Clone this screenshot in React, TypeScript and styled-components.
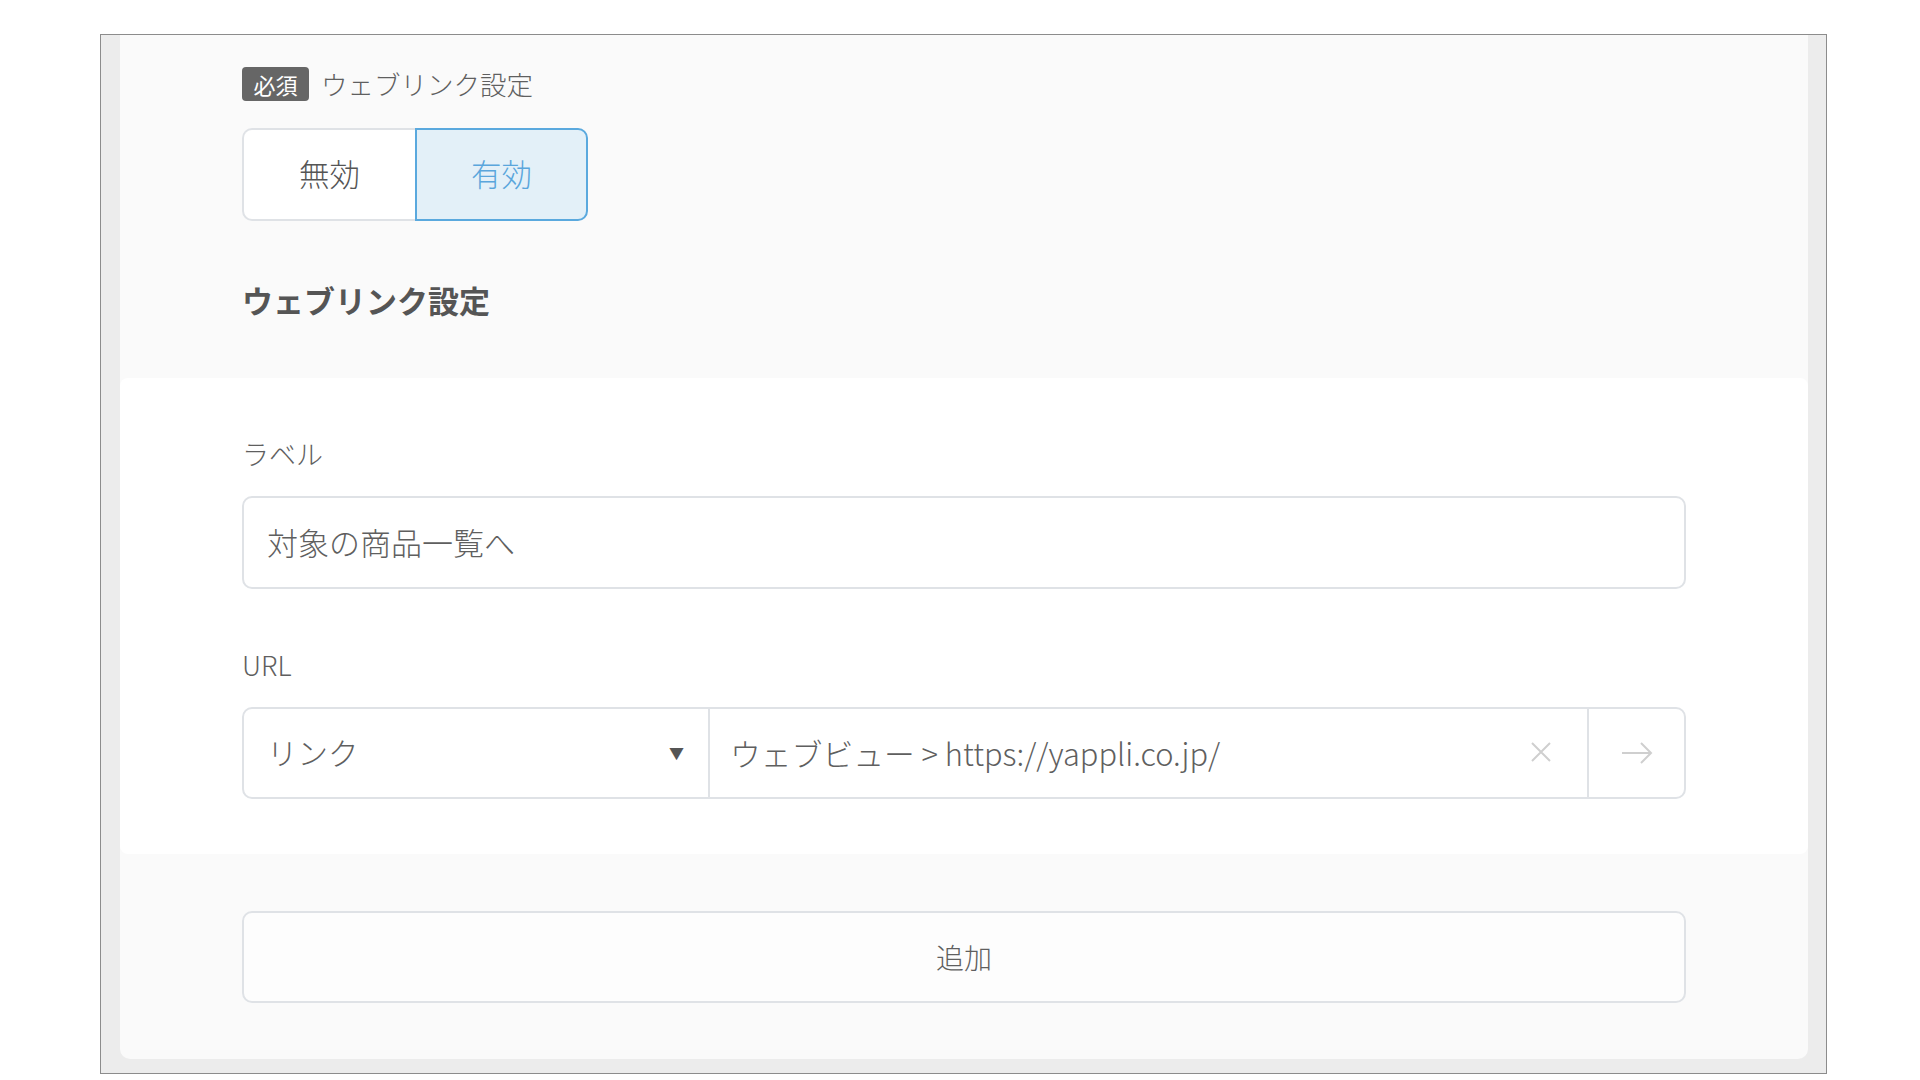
import styled, { createGlobalStyle } from 'styled-components'

const GlobalStyle = createGlobalStyle`
  body {
    margin: 0;
    background: #fff;
    font-family: "Noto Sans CJK JP", "Noto Sans", sans-serif;
    font-weight: 300;
    color: #666;
  }
`

const App = () => {
  return (
    <>
      <GlobalStyle />
      <Page>
        <Frame>
          <Panel>
            <TopSection>
              <FieldHeader>
                <Badge>必須</Badge>
                <HeaderLabel>ウェブリンク設定</HeaderLabel>
              </FieldHeader>
              <Toggle>
                <ToggleButton>無効</ToggleButton>
                <ToggleButton $active>有効</ToggleButton>
              </Toggle>
              <SectionTitle>ウェブリンク設定</SectionTitle>
            </TopSection>

            <Card>
              <FieldLabel>ラベル</FieldLabel>
              <TextBox>対象の商品一覧へ</TextBox>
              <FieldLabel $spaced>URL</FieldLabel>
              <UrlGroup>
                <Select>
                  <span>リンク</span>
                  <Caret>▼</Caret>
                </Select>
                <UrlValue>
                  <span>ウェブビュー &gt; https://yappli.co.jp/</span>
                  <svg width="22" height="22" viewBox="0 0 22 22">
                    <path d="M2 2 L20 20 M20 2 L2 20" stroke="#cfcfcf" strokeWidth="2" fill="none" />
                  </svg>
                </UrlValue>
                <GoButton>
                  <svg width="32" height="24" viewBox="0 0 32 24">
                    <path d="M1 12 H30 M20 2 L30 12 L20 22" stroke="#cfcfcf" strokeWidth="2" fill="none" />
                  </svg>
                </GoButton>
              </UrlGroup>
            </Card>

            <BottomSection>
              <AddButton>追加</AddButton>
            </BottomSection>
          </Panel>
        </Frame>
      </Page>
    </>
  )
}

export default App

const Page = styled.div`
  padding: 34px 0 0 100px;
  width: 1920px;
  height: 1080px;
  box-sizing: border-box;
  overflow: hidden;
`

const Frame = styled.div`
  width: 1727px;
  height: 1040px;
  box-sizing: border-box;
  border: 1px solid #8c8c8c;
  background: #ececec;
  padding: 0 18px 14px 19px;
  display: flex;
`

const Panel = styled.div`
  flex: 1;
  background: #fafafa;
  border-radius: 0 0 10px 10px;
  display: flex;
  flex-direction: column;
`

const TopSection = styled.div`
  padding: 32px 122px 58px;
  display: flex;
  flex-direction: column;
  align-items: flex-start;
`

const FieldHeader = styled.div`
  display: flex;
  align-items: center;
  gap: 12px;
  height: 34px;
`

const Badge = styled.span`
  display: inline-flex;
  align-items: center;
  justify-content: center;
  width: 67px;
  height: 34px;
  border-radius: 4px;
  background: #666;
  color: #fff;
  font-size: 22px;
  font-weight: 400;
  line-height: 1;
`

const HeaderLabel = styled.span`
  font-size: 26.5px;
  color: #5f5f5f;
  line-height: 34px;
`

const Toggle = styled.div`
  display: flex;
  margin-top: 27px;
  height: 93px;
`

const ToggleButton = styled.div<{ $active?: boolean }>`
  width: 173px;
  box-sizing: border-box;
  display: flex;
  align-items: center;
  justify-content: center;
  padding-bottom: 3px;
  font-size: 30.5px;
  color: ${(p) => (p.$active ? '#5aa6dc' : '#555')};
  background: ${(p) => (p.$active ? '#e3f0f8' : '#fff')};
  border: 2px solid ${(p) => (p.$active ? '#5aa9de' : '#dfe2e6')};
  border-radius: ${(p) => (p.$active ? '0 10px 10px 0' : '10px 0 0 10px')};
  ${(p) => (p.$active ? '' : 'border-right: none;')}
`

const SectionTitle = styled.h2`
  margin: 59px 0 0;
  font-size: 31px;
  line-height: 40px;
  font-weight: 700;
  color: #555;
`

const Card = styled.div`
  background: #fff;
  border-radius: 8px;
  padding: 58px 122px 55px;
  display: flex;
  flex-direction: column;
`

const FieldLabel = styled.div<{ $spaced?: boolean }>`
  font-size: 27px;
  line-height: 36px;
  color: #5f5f5f;
  margin-top: ${(p) => (p.$spaced ? '58px' : '0')};
  margin-bottom: 24px;
`

const TextBox = styled.div`
  height: 93px;
  box-sizing: border-box;
  border: 2px solid #dfe2e6;
  border-radius: 10px;
  background: #fff;
  padding: 0 23px 2px;
  display: flex;
  align-items: center;
  font-size: 31px;
  color: #5f5f5f;
`

const UrlGroup = styled.div`
  display: flex;
  height: 92px;
  box-sizing: border-box;
  border: 2px solid #dfe2e6;
  border-radius: 10px;
  background: #fff;
`

const Select = styled.div`
  width: 466px;
  box-sizing: border-box;
  border-right: 2px solid #dfe2e6;
  display: flex;
  align-items: center;
  justify-content: space-between;
  padding: 0 24px 2px 23px;
  font-size: 30.5px;
  color: #5f5f5f;
`

const Caret = styled.span`
  font-size: 15px;
  color: #555;
`

const UrlValue = styled.div`
  flex: 1;
  display: flex;
  align-items: center;
  justify-content: space-between;
  padding: 0 35px 2px 20px;
  font-size: 30.8px;
  color: #5f5f5f;
`

const GoButton = styled.div`
  width: 97px;
  box-sizing: border-box;
  border-left: 2px solid #dfe2e6;
  display: flex;
  align-items: center;
  justify-content: center;
`

const BottomSection = styled.div`
  padding: 57px 122px 55px;
  display: flex;
  flex-direction: column;
`

const AddButton = styled.div`
  height: 92px;
  box-sizing: border-box;
  border: 2px solid #dfe2e6;
  border-radius: 10px;
  background: #fdfdfd;
  display: flex;
  align-items: center;
  justify-content: center;
  font-size: 28px;
  color: #5f5f5f;
`
